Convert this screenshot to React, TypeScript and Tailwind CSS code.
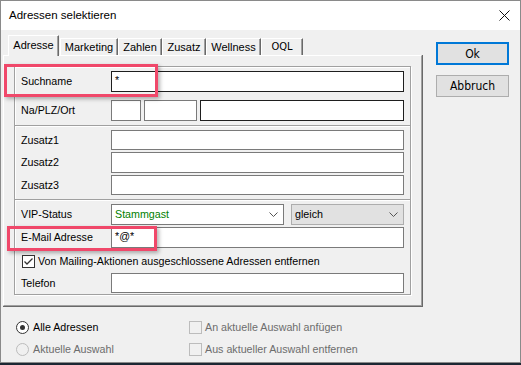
import React from 'react'

const label = "text-[10.7px] leading-none text-black"

function Field({ w = 'w-[293px]', h = 'h-[21px]', dark = false, value = '' }: { w?: string; h?: string; dark?: boolean; value?: string }) {
  return (
    <div className={`${w} ${h} bg-white border ${dark ? 'border-[#1e1e1e]' : 'border-[#7a7a7a]'} flex items-start pl-[3px] pt-[3px] text-[10.7px] leading-none`}>
      {value}
    </div>
  )
}

function Chevron() {
  return (
    <svg width="9" height="5" viewBox="0 0 9 5" className="shrink-0">
      <polyline points="0.5,0.5 4.5,4.5 8.5,0.5" fill="none" stroke="#555" strokeWidth="1" />
    </svg>
  )
}

function Row({ text, mt, children }: { text: string; mt: string; children: React.ReactNode }) {
  return (
    <div className={`flex items-center pl-[6px] ${mt}`}>
      <span className={`${label} w-[90px]`}>{text}</span>
      {children}
    </div>
  )
}

function Sep({ mt }: { mt: string }) {
  return <div className={`${mt} h-[2px] border-t border-[#a0a0a0] border-b border-b-white`} />
}

const tabs = [
  { name: 'Marketing', w: 'w-[58px]' },
  { name: 'Zahlen', w: 'w-[44px]' },
  { name: 'Zusatz', w: 'w-[44px]' },
  { name: 'Wellness', w: 'w-[55px]' },
]

export default function App() {
  return (
    <div className="w-[521px] h-[365px] bg-[#1c2733] overflow-hidden relative font-['Liberation_Sans',Arial,sans-serif]">
      <div className="w-[521px] h-[363px] bg-[#f0f0f0] border border-[#8a8a8a] flex flex-col">
        {/* Title bar */}
        <div className="h-[29px] bg-white flex items-center justify-between pl-[8px] pr-[10px] shrink-0">
          <span className="text-[11.5px] text-black">Adressen selektieren</span>
          <svg width="11" height="11" viewBox="0 0 11 11">
            <path d="M0.5 0.5 L10.5 10.5 M10.5 0.5 L0.5 10.5" stroke="#111" strokeWidth="1" />
          </svg>
        </div>

        <div className="flex pl-[2px]">
          {/* Tabs + panel */}
          <div className="flex flex-col mt-[5px]">
            <div className="flex items-end pl-[5px]">
              <div className="relative z-10 -mb-px w-[51px] h-[21px] bg-[#f0f0f0] border-l border-t border-white border-r border-r-[#696969] shadow-[inset_-1px_0_0_#a0a0a0] flex items-center justify-center text-[11px] pb-[2px]">
                Adresse
              </div>
              <div className="w-px" />
              {tabs.map((t) => (
                <div key={t.name} className={`${t.w} h-[17px] border-l border-t border-white border-r border-r-[#696969] shadow-[inset_-1px_0_0_#a0a0a0] flex items-center justify-center text-[11px]`}>
                  {t.name}
                </div>
              ))}
              <div className="w-[42px] h-[17px] border-l border-t border-white border-r border-r-[#696969] shadow-[inset_-1px_0_0_#a0a0a0] flex items-center justify-center text-[11px] font-['Liberation_Sans_Narrow','DejaVu_Sans_Condensed',sans-serif]">
                OQL
              </div>
            </div>

            <div className="w-[420px] h-[252px] border-r border-b border-[#696969]">
              <div className="h-full border-l border-t border-white border-r border-b border-r-[#a0a0a0] border-b-[#a0a0a0] pl-[10px] pt-[10px]">
                <div className="w-[397px] border border-[#a0a0a0] shadow-[inset_1px_1px_0_#fff,1px_1px_0_#fff] pb-[1px] flex flex-col">
                  <Row text="Suchname" mt="mt-[4px]">
                    <Field dark value="*" />
                  </Row>
                  <Row text="Na/PLZ/Ort" mt="mt-[8px]">
                    <div className="flex gap-[3px]">
                      <Field w="w-[30px]" />
                      <Field w="w-[53px]" />
                      <Field w="w-[204px]" dark />
                    </div>
                  </Row>
                  <Sep mt="mt-[4px]" />
                  <Row text="Zusatz1" mt="mt-[3px]">
                    <Field h="h-[20px]" />
                  </Row>
                  <Row text="Zusatz2" mt="mt-[2px]">
                    <Field />
                  </Row>
                  <Row text="Zusatz3" mt="mt-[2px]">
                    <Field h="h-[20px]" />
                  </Row>
                  <Sep mt="mt-[4px]" />
                  <Row text="VIP-Status" mt="mt-[3px]">
                    <div className="flex gap-[7px]">
                      <div className="w-[173px] h-[21px] bg-white border border-[#7a7a7a] flex items-center justify-between pl-[3px] pr-[5px] text-[10.7px] text-[#008000]">
                        Stammgast
                        <Chevron />
                      </div>
                      <div className="w-[113px] h-[21px] bg-[#e1e1e1] border border-[#adadad] flex items-center justify-between pl-[3px] pr-[5px] text-[10.7px]">
                        gleich
                        <Chevron />
                      </div>
                    </div>
                  </Row>
                  <Row text="E-Mail Adresse" mt="mt-[2px]">
                    <Field value="*@*" />
                  </Row>
                  <div className="flex items-center pl-[7px] mt-[7px] h-[13px]">
                    <div className="w-[13px] h-[13px] bg-white border border-[#333] flex items-center justify-center">
                      <svg width="11" height="11" viewBox="0 0 11 11">
                        <polyline points="1.5,5.5 4,8 9.5,2.5" fill="none" stroke="#333" strokeWidth="1.3" />
                      </svg>
                    </div>
                    <span className={`${label} ml-[3px]`}>Von Mailing-Aktionen ausgeschlossene Adressen entfernen</span>
                  </div>
                  <Row text="Telefon" mt="mt-[5px]">
                    <Field h="h-[20px]" />
                  </Row>
                </div>
              </div>
            </div>
          </div>

          {/* Buttons */}
          <div className="flex flex-col ml-[13px] mt-[12px]">
            <button className="w-[73px] h-[23px] bg-[#e1e1e1] border-2 border-[#0078d7] text-[12px] font-['Liberation_Sans_Narrow','DejaVu_Sans_Condensed',sans-serif] flex items-center justify-center">
              Ok
            </button>
            <button className="mt-[10px] w-[73px] h-[22px] bg-[#e1e1e1] border border-[#adadad] text-[12px] font-['Liberation_Sans_Narrow','DejaVu_Sans_Condensed',sans-serif] flex items-center justify-center">
              Abbruch
            </button>
          </div>
        </div>

        {/* Bottom options */}
        <div className="grid grid-cols-[173px_1fr] gap-y-[9px] pl-[15px] mt-[14px] text-[10.7px]">
          <div className="flex items-center h-[13px]">
            <div className="w-[13px] h-[13px] rounded-full bg-white border border-[#333] flex items-center justify-center">
              <div className="w-[5px] h-[5px] rounded-full bg-[#333]" />
            </div>
            <span className="ml-[4px]">Alle Adressen</span>
          </div>
          <div className="flex items-center h-[13px]">
            <div className="w-[13px] h-[13px] border border-[#bcbcbc]" />
            <span className="ml-[3px] text-[#6d6d6d]">An aktuelle Auswahl anfügen</span>
          </div>
          <div className="flex items-center h-[13px]">
            <div className="w-[13px] h-[13px] rounded-full border border-[#bcbcbc]" />
            <span className="ml-[4px] text-[#6d6d6d]">Aktuelle Auswahl</span>
          </div>
          <div className="flex items-center h-[13px]">
            <div className="w-[13px] h-[13px] border border-[#bcbcbc]" />
            <span className="ml-[3px] text-[#6d6d6d]">Aus aktueller Auswahl entfernen</span>
          </div>
        </div>
      </div>

      {/* Annotation highlights */}
      <div className="absolute left-[4px] top-[64px] w-[154px] h-[33px] border-[3px] border-[#f0486a] shadow-[2px_2px_4px_rgba(0,0,0,0.3)]" />
      <div className="absolute left-[7px] top-[226px] w-[150px] h-[25px] border-[3px] border-[#f0486a] shadow-[2px_2px_4px_rgba(0,0,0,0.3)]" />
    </div>
  )
}
